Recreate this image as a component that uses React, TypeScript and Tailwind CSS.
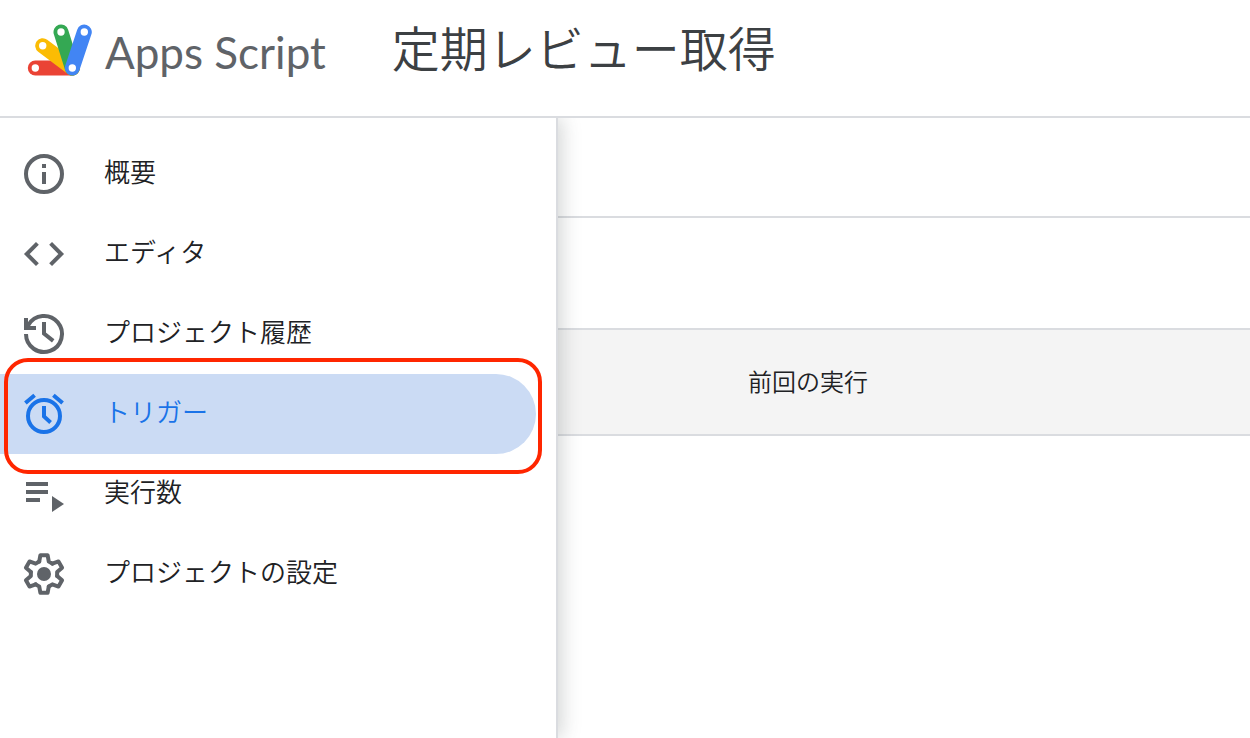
import React from "react";

interface INavItem {
  name: string;
  icon: React.ReactNode;
  isActive?: boolean;
}

function Icon({ children }: { children: React.ReactNode }) {
  return (
    <svg
      viewBox="0 0 24 24"
      className="w-12 h-12 shrink-0"
      fill="none"
      stroke="currentColor"
      strokeWidth="2"
      aria-hidden="true"
    >
      {children}
    </svg>
  );
}

const InfoIcon = (
  <Icon>
    <circle cx="12" cy="12" r="9" />
    <path d="M12 11v6M12 7v2" />
  </Icon>
);

const CodeIcon = (
  <Icon>
    <path d="M8.7 6.7 3.4 12l5.3 5.3M15.3 6.7l5.3 5.3-5.3 5.3" />
  </Icon>
);

const HistoryIcon = (
  <Icon>
    <path d="M3 12a9 9 0 1 0 1.2-4.5L3.4 9" />
    <path d="M3 4v5h5M12 6v5.8l4.6 3.6" />
  </Icon>
);

const AlarmIcon = (
  <Icon>
    <circle cx="12" cy="13" r="8" />
    <path d="M12 8v5.2l3.3 3M2.7 6.5l4.6-3.9M21.3 6.5l-4.6-3.9" />
  </Icon>
);

const ExecutionsIcon = (
  <Icon>
    <path d="M3 7h11M3 11h11M3 15h7" />
    <path d="M16 13v8l6-4z" fill="currentColor" stroke="none" />
  </Icon>
);

const SettingsIcon = (
  <Icon>
    <g transform="translate(12 12)" strokeLinecap="round" strokeLinejoin="round">
      {[0, 60, 120, 180, 240, 300].map((angle) => (
        <path
          key={angle}
          d="M-2.4-6.2-1.8-9.4H1.8L2.4-6.2 4.17-5.18"
          transform={`rotate(${angle})`}
        />
      ))}
      <circle r="3.5" fill="currentColor" stroke="none" />
    </g>
  </Icon>
);

const menuItems: INavItem[] = [
  { name: "概要", icon: InfoIcon },
  { name: "エディタ", icon: CodeIcon },
  { name: "プロジェクト履歴", icon: HistoryIcon },
  { name: "トリガー", icon: AlarmIcon, isActive: true },
  { name: "実行数", icon: ExecutionsIcon },
  { name: "プロジェクトの設定", icon: SettingsIcon },
];

function Logo() {
  return (
    <svg viewBox="27 24 66 53" className="w-[66px] h-[53px] shrink-0" aria-hidden="true">
      <g strokeWidth="15" strokeLinecap="round">
        <path d="M35.3 68H72.3" stroke="#ea4335" />
        <path d="M42.7 45.7 72.3 68" stroke="#fbbc04" />
        <path d="M61 32 72.3 68" stroke="#34a853" />
        <path d="M84.3 32 72.3 68" stroke="#4285f4" />
      </g>
      <g fill="#fff">
        <circle cx="35.3" cy="68" r="3.7" />
        <circle cx="42.7" cy="45.7" r="3.7" />
        <circle cx="61" cy="32" r="3.7" />
        <circle cx="84.3" cy="32" r="3.7" />
        <circle cx="72.3" cy="68" r="3.7" />
      </g>
    </svg>
  );
}

function Header() {
  return (
    <header className="relative z-20 h-[118px] bg-white border-b-2 border-[#dadce0] pb-8 pt-4 pl-[27px] flex items-center">
      <a href="#" className="flex items-center gap-3">
        <Logo />
        <span className="font-['Lato',sans-serif] text-[44px] leading-[60px] pt-1 text-[#5f6368]">
          Apps Script
        </span>
      </a>
      <h1 className="ml-[66px] pb-2 text-5xl leading-[60px] font-[350] text-[#3c4043] whitespace-nowrap">
        定期レビュー取得
      </h1>
    </header>
  );
}

function Sidebar() {
  return (
    <nav className="relative z-10 w-[558px] shrink-0 bg-white border-r-2 border-[#dadce0] py-4 pr-5 shadow-[4px_0_18px_rgba(60,70,67,0.22)]">
      {menuItems.map((item) => (
        <div key={item.name} className="relative">
          <a
            href="#"
            className={`flex items-center gap-9 h-20 pl-5 rounded-r-full ${
              item.isActive ? "bg-[#cbdbf4] text-[#1a73e8]" : "text-[#5f6368]"
            }`}
          >
            {item.icon}
            <span
              className={`text-[26px] leading-10 pb-1.5 font-[350] ${
                item.isActive ? "" : "text-[#202124]"
              }`}
            >
              {item.name}
            </span>
          </a>
          {item.isActive && (
            <div className="absolute -top-4 -bottom-5 left-1 -right-1.5 z-10 border-4 border-[#ff2600] rounded-3xl pointer-events-none" />
          )}
        </div>
      ))}
    </nav>
  );
}

function App() {
  return (
    <div className="min-h-screen flex flex-col bg-white overflow-hidden font-['Noto_Sans_CJK_JP',sans-serif]">
      <Header />
      <div className="flex flex-1">
        <Sidebar />
        <main className="flex-1 min-w-0">
          <div className="h-[100px] border-b-2 border-[#dadce0]" />
          <div className="h-[110px]" />
          <table className="w-full">
            <thead>
              <tr className="h-[106px] bg-[#f4f4f4] border-y-2 border-[#dadce0]">
                <th className="pl-[190px] pb-0.5 text-left text-2xl font-[350] text-[#202124]">
                  前回の実行
                </th>
              </tr>
            </thead>
          </table>
        </main>
      </div>
    </div>
  );
}

export default App;
